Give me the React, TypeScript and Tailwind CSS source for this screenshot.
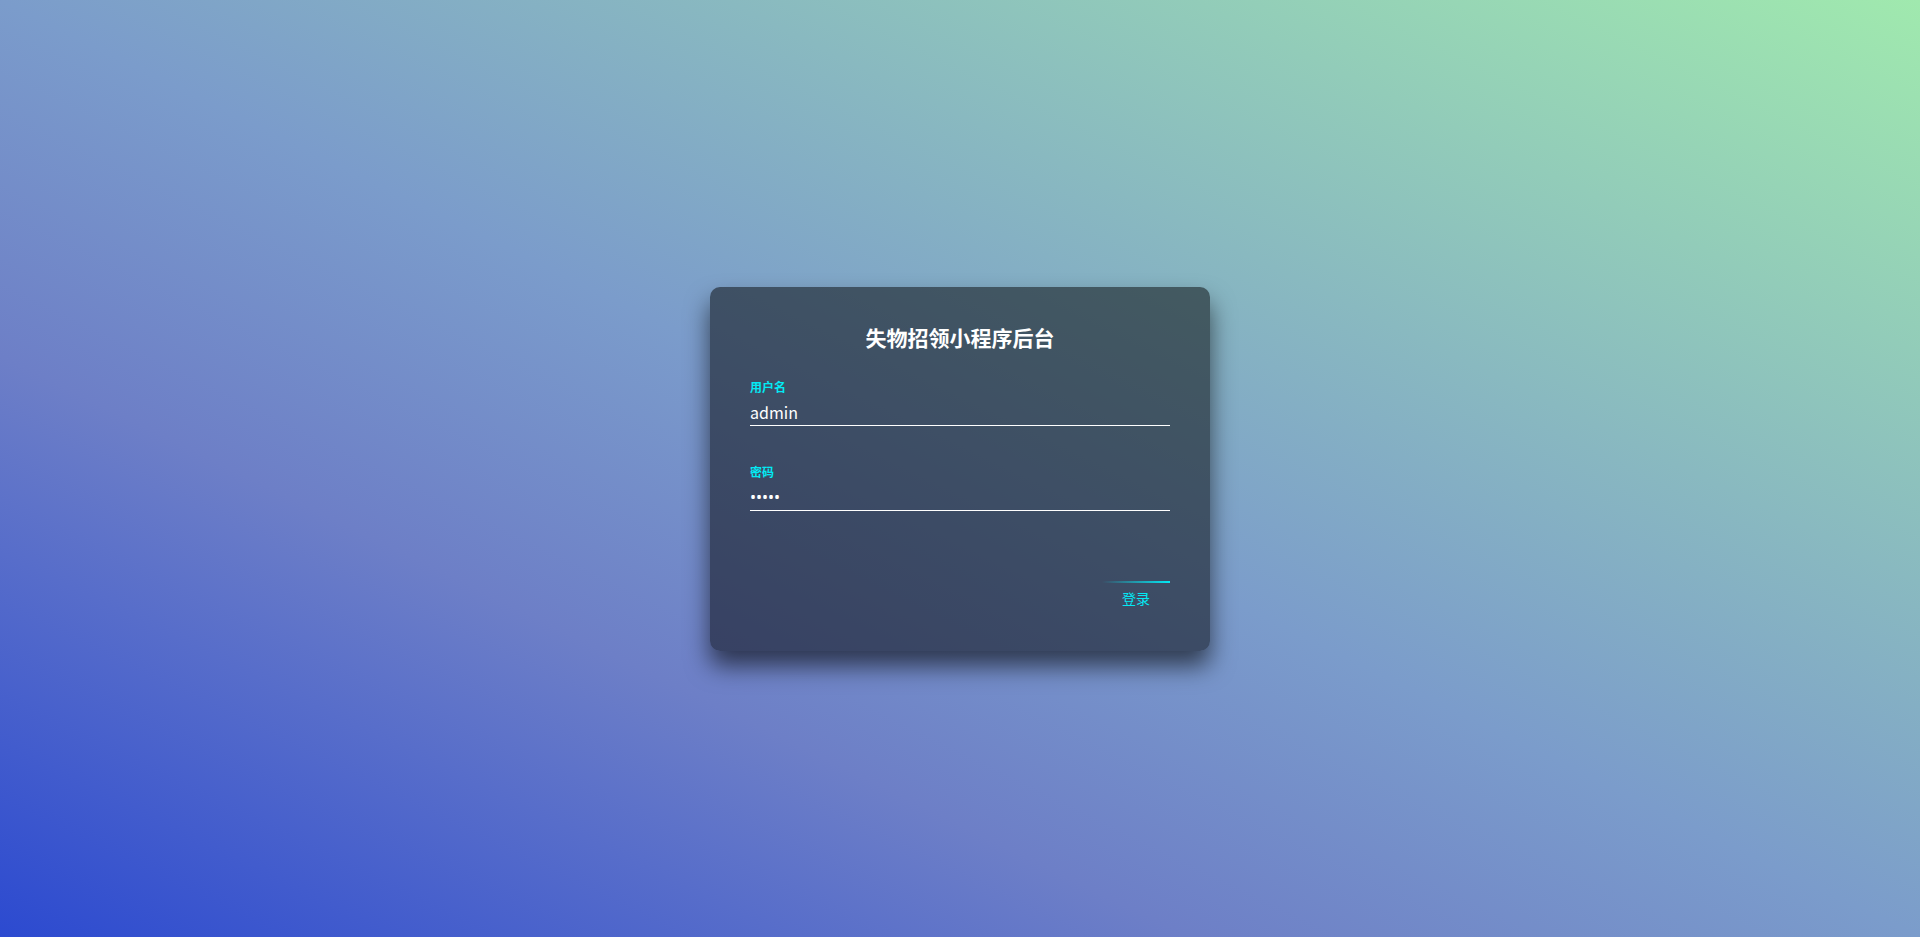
import { useState } from "react";

type FieldProps = {
  label: string;
  type: string;
  value: string;
  onChange: (v: string) => void;
};

function Field({ label, type, value, onChange }: FieldProps) {
  return (
    <div className="flex flex-col">
      <label className="text-[12px] leading-[16px] font-bold text-[#03e9f4]">
        {label}
      </label>
      <input
        type={type}
        value={value}
        onChange={(e) => onChange(e.target.value)}
        className={
          "mt-[6px] w-full bg-transparent border-0 border-b border-white pb-[2px] text-[16px] leading-[22px] h-[25px] text-white outline-none" +
          (type === "password" ? " font-['Noto_Sans',sans-serif]" : "")
        }
      />
    </div>
  );
}

export default function App() {
  const [username, setUsername] = useState("admin");
  const [password, setPassword] = useState("12345");

  return (
    <div
      className="min-h-screen w-full flex items-center justify-center bg-[linear-gradient(to_top_right,#2c4ad0_0%,#6d7fc7_31%,#7b9ccb_50%,#a0e9ae_100%)]"
      style={{ fontFamily: '"Noto Sans CJK SC", "Noto Sans", sans-serif' }}
    >
      <div className="w-[500px] p-10 rounded-[10px] bg-black/50 shadow-[0_15px_25px_rgba(0,0,0,0.6)]">
        <h2 className="text-center text-white font-bold text-[21px] leading-[21px] mb-[31px]">
          失物招领小程序后台
        </h2>
        <form
          className="flex flex-col"
          onSubmit={(e) => e.preventDefault()}
        >
          <Field
            label="用户名"
            type="text"
            value={username}
            onChange={setUsername}
          />
          <div className="mt-[38px]">
            <Field
              label="密码"
              type="password"
              value={password}
              onChange={setPassword}
            />
          </div>
          <div className="mt-[70px] flex justify-end">
            <button type="submit" className="flex flex-col w-[68px]">
              <span className="h-[2px] w-full bg-[linear-gradient(90deg,transparent,#03e9f4)]" />
              <span className="pt-[5px] pb-[3px] text-center text-[14px] leading-[20px] text-[#03e9f4]">
                登录
              </span>
            </button>
          </div>
        </form>
      </div>
    </div>
  );
}
